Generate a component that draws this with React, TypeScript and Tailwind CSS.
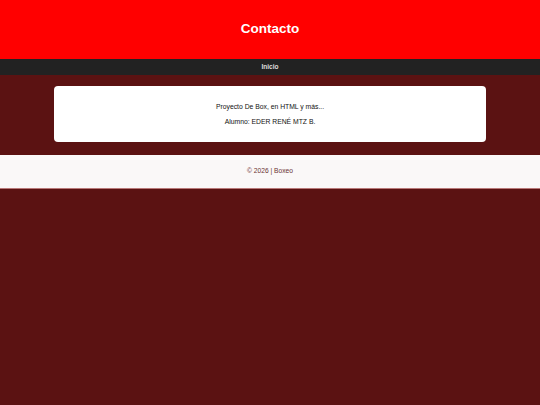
export default function App() {
  return (
    <div
      className="min-h-[405px] bg-[#5b1212] flex flex-col"
      style={{ fontFamily: '"Liberation Sans", Arial, sans-serif' }}
    >
      <header className="h-[59px] bg-[#ff0000] flex items-center justify-center">
        <h1 className="text-[13.5px] font-bold text-white">Contacto</h1>
      </header>
      <nav className="h-[16px] bg-[#222222] flex items-center justify-center">
        <a className="text-[6.6px] font-bold text-[#dddddd]">Inicio</a>
      </nav>
      <main className="px-[54px] pt-[11px] pb-[13px]">
        <div className="h-[56px] bg-white rounded-[4px] flex flex-col items-center justify-center gap-[7px] text-[6.8px] leading-[8px] text-[#111]">
          <p>Proyecto De Box, en HTML y más...</p>
          <p>Alumno: EDER RENÉ MTZ B.</p>
        </div>
      </main>
      <footer className="h-[34px] bg-[#faf8f8] border-b border-[#b87878] flex items-center justify-center">
        <p className="text-[6.7px] text-[#6b3333]">© 2026 | Boxeo</p>
      </footer>
    </div>
  );
}
